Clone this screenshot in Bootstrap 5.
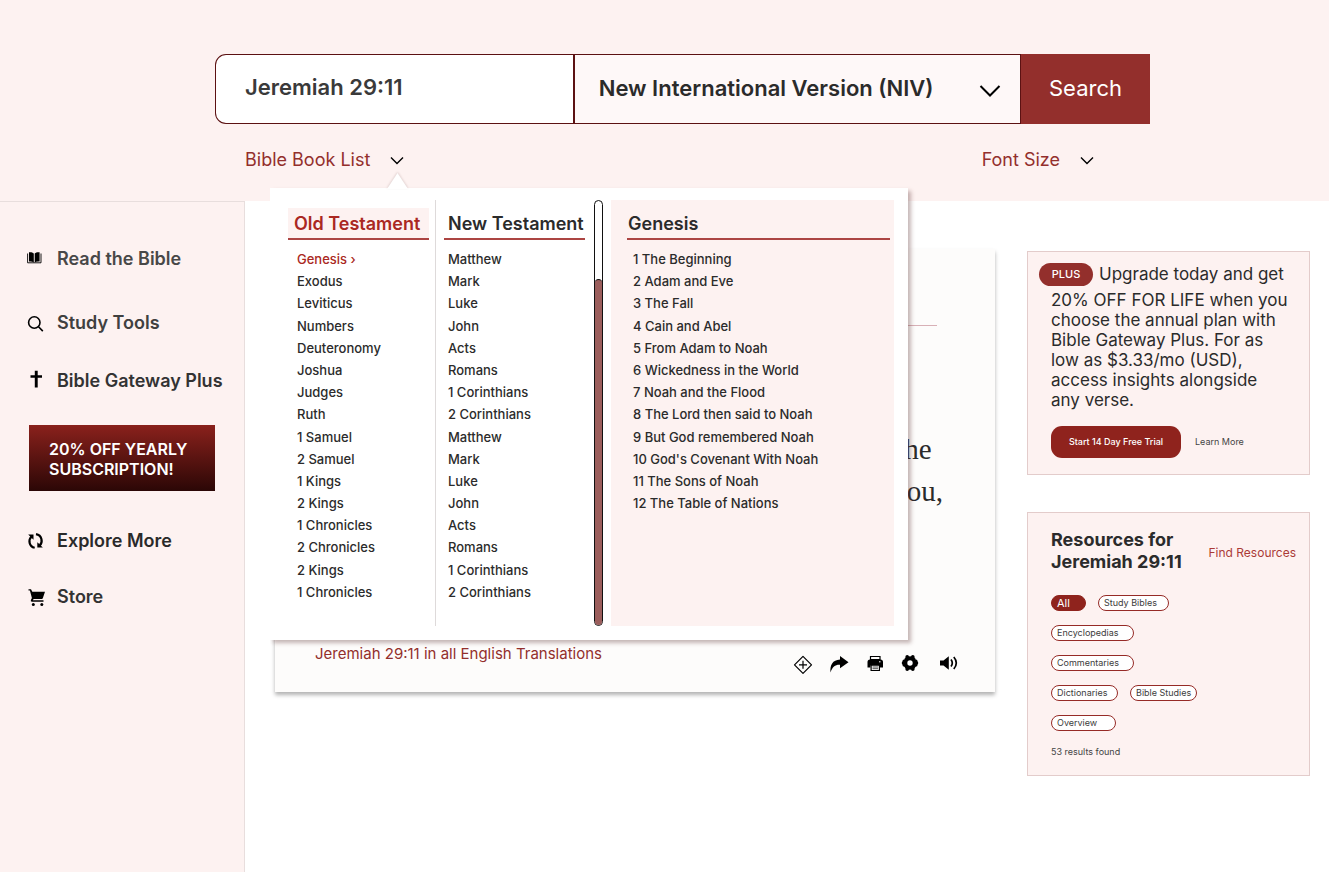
<!DOCTYPE html>
<html lang="en">
<head>
<meta charset="utf-8">
<meta name="viewport" content="width=device-width, initial-scale=1">
<title>Jeremiah 29:11</title>
<link href="https://cdn.jsdelivr.net/npm/bootstrap@5.3.0/dist/css/bootstrap.min.css" rel="stylesheet">
<style>
:root { --blush: #fdf2f1; --brick: #932f2c; --deep: #8f231d; --wine: #5c1112; --ink: #2b2b2b; }
body { font-family: Inter, "Liberation Sans", sans-serif; color: var(--ink); background: #fff; }
a { text-decoration: none; color: inherit; }
ul { list-style: none; margin: 0; padding: 0; }
svg { display: block; flex: none; }

.top-band { background: var(--blush); height: 201px; padding: 54px 179px 0 215px; }
.search-bar { height: 70px; }
.search-bar .form-control, .search-bar .form-select {
  border: 1px solid var(--wine); border-radius: 0; font-size: 22px; font-weight: 600; color: var(--ink); box-shadow: none;
}
.search-bar .form-control { flex: 363 1 0; width: 0; padding: 0 29px 4px; color: #3a3a3a; background: #fff; border-radius: 11px 0 0 11px; border-right-width: 2px; }
.search-bar .form-select {
  flex: 439 1 0; width: 0; padding: 0 60px 2px 24px; background-color: #fef8f8; border-left-width: 0;
  background-image: url("data:image/svg+xml,%3Csvg xmlns='http://www.w3.org/2000/svg' viewBox='0 0 22 14'%3E%3Cpath fill='none' stroke='%23000' stroke-width='2' d='M1.500 2 11 11.500 20.500 2'/%3E%3C/svg%3E");
  background-size: 22px 14px; background-position: right 19px top 29px;
}
.search-btn { width: 129px; border-radius: 0; background: var(--brick); color: #fff; font-size: 22px; border: 0; padding: 0 0 2px; }
.search-btn:hover { background: var(--deep); color: #fff; }
.sub-bar { padding: 24px 56px 0 30px; }
.drop-link { border: 0; background: none; padding: 0; color: var(--brick); font-size: 18px; line-height: 24px; gap: 20px; }

.book-menu { top: 40px; left: 25px; width: 638px; padding: 12px 14px 14px 18px; background: #fff; z-index: 10; box-shadow: 3px 3px 4px rgba(92, 50, 50, .35); clip-path: inset(-20px -12px -12px 0); }
.menu-tip { top: 24px; left: 142px; z-index: 11; filter: drop-shadow(0 -1px 1px rgba(90, 50, 50, .2)); }
.menu-panel { min-height: 426px; padding: 8px 0 23px; }
.panel-a { width: 148px; padding-right: 6px; border-right: 1px solid #dedada; }
.panel-b { width: 141px; margin-left: 8px; }
.panel-c { margin-left: 8px; padding-left: 16px; padding-right: 4px; background: var(--blush); }
.panel-head { font-size: 18px; line-height: 28px; font-weight: 600; margin: 0 0 8px; padding-top: 2px; border-bottom: 2px solid #ac4543; white-space: nowrap; }
.panel-a .panel-head { background: var(--blush); color: #aa2822; padding-left: 6px; }
.panel-b .panel-head { padding-left: 4px; }
.panel-c .panel-head { padding-left: 1px; }
.book-list { display: grid; grid-template-rows: repeat(16, 1fr); font-size: 13px; line-height: 22px; font-weight: 500; padding-left: 9px; }
.panel-b .book-list { padding-left: 4px; }
.panel-c .book-list { padding-left: 6px; }
.book-on { color: #aa2822; }
.scroll-track { width: 9px; margin-left: 9px; border: 1px solid #111; border-radius: 5px; background: #fff; padding-top: 78px; }
.scroll-thumb { background: #9b5e5c; border-top: 1px solid #111; border-radius: 4px; }

.side-nav { width: 245px; background: var(--blush); border: solid #e8dedd; border-width: 1px 1px 0 0; padding-top: 45px; }
.side-link { font-size: 18px; line-height: 24px; font-weight: 600; padding-left: 27px; gap: 12px; white-space: nowrap; color: #333; }
.side-link svg { width: 18px; }
.tone-1 { color: #484848; } .tone-2 { color: #404040; } .tone-3 { color: #2a2a2a; }
.mt-s { margin-top: 32px; } .mt-m { margin-top: 34px; } .mt-l { margin-top: 40px; } .mt-b { margin-top: 38px; }
.promo { margin: 32px 29px 0; padding: 14px 19px 12px 20px; color: #fff; font-size: 16px; line-height: 20px; font-weight: 600; background: linear-gradient(#8a211c, #2b0706); white-space: nowrap; }

.content { padding: 48px 19px 48px 30px; gap: 32px; }
.verse-card { height: 443px; background: #fdfcfb; box-shadow: 0 3px 4px rgba(0, 0, 0, .3); padding: 76px 36px 0 40px; }
.verse-rule { border-top: 1px solid #d8b0b6; margin-right: 22px; }
.verse-text { font: 29px/42px "Liberation Serif", serif; text-indent: 4px; margin: 102px 16px 0 0; }
.verse-foot { margin-top: auto; margin-bottom: 16px; color: var(--brick); }
.verse-link { font-size: 15px; line-height: 20px; margin-bottom: 12px; }
.tool-btn { border: 0; background: none; padding: 0; }
.tool-row { gap: 16px; }

.right-rail { width: 283px; padding-top: 2px; gap: 37px; }
.rail-box { background: var(--blush); border: 1px solid #e3cccb; }
.plus-box { padding: 11px 20px 15px 11px; min-height: 224px; }
.plus-pill { width: 54px; height: 23px; border-radius: 12px; background: var(--brick); color: #fff; font-size: 11px; line-height: 23px; text-align: center; font-weight: 500; margin-right: 6px; }
.plus-lead { font-size: 17px; line-height: 23px; white-space: nowrap; }
.plus-copy { font-size: 17px; line-height: 20px; margin: 4px -10px 0 12px; }
.trial-btn { background: var(--deep); color: #fff; border: 0; border-radius: 11px; width: 130px; height: 32px; font-size: 9px; font-weight: 500; padding: 0; }
.plus-actions { margin: 16px 0 0 12px; gap: 14px; font-size: 9px; color: #444; }
.res-box { padding: 16px 13px 17px 23px; min-height: 264px; }
.res-title { font-size: 18px; line-height: 22px; font-weight: 700; margin: 0; }
.find-link { font-size: 12px; line-height: 20px; color: #ab3a37; margin-top: 3px; }
.chip { height: 16px; border: 1px solid #962b27; border-radius: 8px; background: #fff; color: #3c3c3c; font-size: 9px; line-height: 12px; padding: 0 0 0 5px; text-align: left; white-space: nowrap; }
.chip-on { background: var(--deep); border-color: var(--deep); color: #fff; font-size: 11px; }
.w-xs { width: 35px; } .w-s { width: 65px; } .w-m { width: 67px; } .w-l { width: 71px; } .w-xl { width: 83px; }
.chip-rows { margin-top: 22px; gap: 14px; }
.chip-rows > div { gap: 12px; }
.found { font-size: 9px; line-height: 12px; color: #444; margin: 15px 0 0; }
</style>
</head>
<body class="d-flex flex-column min-vh-100">

<header class="top-band">
  <form class="search-bar d-flex" onsubmit="return false">
    <input class="form-control" type="text" value="Jeremiah 29:11" aria-label="Passage">
    <select class="form-select" aria-label="Version"><option>New International Version (NIV)</option></select>
    <button class="btn search-btn" type="submit">Search</button>
  </form>
  <div class="sub-bar d-flex justify-content-between">
    <div class="position-relative">
      <button class="drop-link d-flex align-items-center" type="button" aria-expanded="true">Bible Book List
        <svg width="14" height="9" viewBox="0 0 14 9" fill="none" stroke="#000" stroke-width="1.400"><path d="M1 1.500 7 7.500 13 1.500"/></svg>
      </button>
      <svg class="menu-tip position-absolute" width="21" height="17" viewBox="0 0 21 17"><path d="M10.500 1 21 17H0z" fill="#fff"/></svg>
      <div class="book-menu position-absolute d-flex">
        <section class="menu-panel panel-a d-flex flex-column">
          <h2 class="panel-head">Old Testament</h2>
          <ul class="book-list flex-grow-1">
            <li><a class="book-on" href="#">Genesis ›</a></li><li><a href="#">Exodus</a></li><li><a href="#">Leviticus</a></li><li><a href="#">Numbers</a></li>
            <li><a href="#">Deuteronomy</a></li><li><a href="#">Joshua</a></li><li><a href="#">Judges</a></li><li><a href="#">Ruth</a></li>
            <li><a href="#">1 Samuel</a></li><li><a href="#">2 Samuel</a></li><li><a href="#">1 Kings</a></li><li><a href="#">2 Kings</a></li>
            <li><a href="#">1 Chronicles</a></li><li><a href="#">2 Chronicles</a></li><li><a href="#">2 Kings</a></li><li><a href="#">1 Chronicles</a></li>
          </ul>
        </section>
        <section class="menu-panel panel-b d-flex flex-column">
          <h2 class="panel-head">New Testament</h2>
          <ul class="book-list flex-grow-1">
            <li><a href="#">Matthew</a></li><li><a href="#">Mark</a></li><li><a href="#">Luke</a></li><li><a href="#">John</a></li>
            <li><a href="#">Acts</a></li><li><a href="#">Romans</a></li><li><a href="#">1 Corinthians</a></li><li><a href="#">2 Corinthians</a></li>
            <li><a href="#">Matthew</a></li><li><a href="#">Mark</a></li><li><a href="#">Luke</a></li><li><a href="#">John</a></li>
            <li><a href="#">Acts</a></li><li><a href="#">Romans</a></li><li><a href="#">1 Corinthians</a></li><li><a href="#">2 Corinthians</a></li>
          </ul>
        </section>
        <div class="scroll-track d-flex flex-column"><div class="scroll-thumb flex-grow-1"></div></div>
        <section class="menu-panel panel-c d-flex flex-column flex-grow-1">
          <h2 class="panel-head">Genesis</h2>
          <ul class="book-list flex-grow-1">
            <li><a href="#">1 The Beginning</a></li><li><a href="#">2 Adam and Eve</a></li><li><a href="#">3 The Fall</a></li><li><a href="#">4 Cain and Abel</a></li>
            <li><a href="#">5 From Adam to Noah</a></li><li><a href="#">6 Wickedness in the World</a></li><li><a href="#">7 Noah and the Flood</a></li><li><a href="#">8 The Lord then said to Noah</a></li>
            <li><a href="#">9 But God remembered Noah</a></li><li><a href="#">10 God's Covenant With Noah</a></li><li><a href="#">11 The Sons of Noah</a></li><li><a href="#">12 The Table of Nations</a></li>
          </ul>
        </section>
      </div>
    </div>
    <button class="drop-link d-flex align-items-center" type="button">Font Size
      <svg width="14" height="9" viewBox="0 0 14 9" fill="none" stroke="#000" stroke-width="1.400"><path d="M1 1.500 7 7.500 13 1.500"/></svg>
    </button>
  </div>
</header>

<div class="d-flex flex-grow-1">
  <nav class="side-nav flex-shrink-0">
    <a class="side-link tone-1 d-flex align-items-center" href="#">
      <svg height="18" viewBox="0 0 18 18"><path d="M2 2.300C4 2 5.500 2.400 6.800 3.500V12.500C5.500 11.500 4 11.200 2 11.500zM12.600 2.300c-2-.3-3.700.1-4.900 1.200v9c1.200-1 2.900-1.300 4.900-1z" fill="#000"/><path d="M.6 3.500v9.300h13.400V3.500" fill="none" stroke="#000" stroke-width=".9"/></svg>Read the Bible</a>
    <a class="side-link tone-2 d-flex align-items-center mt-l" href="#">
      <svg height="18" viewBox="0 0 18 18" fill="none" stroke="#000" stroke-width="1.600"><circle cx="7.300" cy="8.500" r="5.700"/><path d="M11.300 12.500 15.800 17.100"/></svg>Study Tools</a>
    <a class="side-link d-flex align-items-center mt-m" href="#">
      <svg height="22" viewBox="0 0 18 22"><path d="M7.800 .800h2.900v4.400H15v2.600h-4.300v9.700H7.800V7.800H3.500V5.200h4.300z" fill="#000"/></svg>Bible Gateway Plus</a>
    <a class="promo d-block" href="#">20% OFF YEARLY<br>SUBSCRIPTION!</a>
    <a class="side-link tone-3 d-flex align-items-center mt-b" href="#">
      <svg height="18" viewBox="0 0 18 18"><path d="M1.200 2.500H6.500V7.800L5 6.200" fill="#000"/><path d="M4.500 4.500C1 8 2 14.500 7.700 15.800" fill="none" stroke="#000" stroke-width="2.200"/><path d="M15.800 15.500H10.300V10.200L12 11.800" fill="#000"/><path d="M12.700 13.500C16.200 10 15 3.300 9 2.200" fill="none" stroke="#000" stroke-width="2.200"/></svg>Explore More</a>
    <a class="side-link d-flex align-items-center mt-s" href="#">
      <svg height="18" viewBox="0 0 18 18"><path d="M1.500 1.200H4l1.300 2.600H18l-2.200 6.500q-.3.700-1 .7H6.600l-.7 1.200H16.500v1.600H5q-1.800-.3-1.100-1.900l1-1.900L2.900 2.600H1.500z" fill="#000"/><circle cx="6.300" cy="16.400" r="1.500"/><circle cx="14.800" cy="16.400" r="1.500"/></svg>Store</a>
  </nav>

  <main class="content d-flex flex-grow-1 align-items-start">
    <article class="verse-card d-flex flex-column flex-grow-1">
      <div class="verse-rule"></div>
      <p class="verse-text align-self-end">the<br>you,</p>
      <div class="verse-foot d-flex justify-content-between align-items-end">
        <a class="verse-link" href="#">Jeremiah 29:11 in all English Translations</a>
        <div class="tool-row d-flex align-items-center">
          <button class="tool-btn" type="button" aria-label="Add"><svg width="20" height="24" viewBox="0 0 20 24" fill="none" stroke="#000" stroke-width="1.200"><path d="M10 4.300 18.500 12.800 10 21.300 1.500 12.800z" stroke-linejoin="round"/><path d="M10 8.800v8M6 12.800h8"/></svg></button>
          <button class="tool-btn" type="button" aria-label="Share"><svg width="20" height="24" viewBox="0 0 20 24"><path d="M11 4 19.500 10.300 11 16.300V12.800C6.500 12.500 3.500 14.500 1.500 20.500.8 13 3.500 8 11 7.500z"/></svg></button>
          <button class="tool-btn" type="button" aria-label="Print"><svg width="20" height="24" viewBox="0 0 20 24"><path d="M5.500 4.500h9.500V7.500H5.500z" fill="none" stroke="#000" stroke-width="1.200"/><path d="M5 7.500h10.500q2.500 0 2.500 2.500v5.500h-3V13.500H5.500v2H2.500V10q0-2.500 2.500-2.500z"/><path d="M6.100 13.200h8.300v5.300H6.100z" fill="#fff" stroke="#000" stroke-width="1.200"/><path d="M7.500 15h5.500M7.500 16.700h5.500" stroke="#000" stroke-width=".7"/><path d="M14 9.800h1.500" stroke="#fff"/></svg></button>
          <button class="tool-btn" type="button" aria-label="Settings"><svg width="18" height="24" viewBox="0 0 18 24"><circle cx="9" cy="11" r="6.800"/><path d="M6.200 4.800v12.400M11.800 4.800v12.400M2.500 11h13" stroke="#000" stroke-width="3.600" stroke-linecap="round"/><path d="M3 9v4M15 9v4" stroke="#000" stroke-width="3" stroke-linecap="round"/><circle cx="9" cy="11" r="2.700" fill="#fff"/></svg></button>
          <button class="tool-btn ms-1" type="button" aria-label="Listen"><svg width="20" height="24" viewBox="0 0 20 24"><path d="M1 8.500h3.500L9.800 4.200v13.600L4.500 13.500H1z"/><path d="M12 7.500q2.600 3.500 0 7M14.800 5q5 6 0 12" fill="none" stroke="#000" stroke-width="1.700"/></svg></button>
        </div>
      </div>
    </article>

    <aside class="right-rail d-flex flex-column flex-shrink-0">
      <section class="rail-box plus-box">
        <div class="d-flex align-items-center"><span class="plus-pill">PLUS</span><span class="plus-lead">Upgrade today and get</span></div>
        <p class="plus-copy">20% OFF FOR LIFE when you<br>choose the annual plan with<br>Bible Gateway Plus. For as<br>low as $3.33/mo (USD),<br>access insights alongside<br>any verse.</p>
        <div class="plus-actions d-flex align-items-center"><button class="trial-btn" type="button">Start 14 Day Free Trial</button><a href="#">Learn More</a></div>
      </section>
      <section class="rail-box res-box">
        <div class="d-flex align-items-center justify-content-between">
          <h2 class="res-title">Resources for<br>Jeremiah 29:11</h2>
          <a class="find-link" href="#">Find Resources</a>
        </div>
        <div class="chip-rows d-flex flex-column">
          <div class="d-flex"><button class="chip chip-on w-xs" type="button">All</button><button class="chip w-l" type="button">Study Bibles</button></div>
          <div class="d-flex"><button class="chip w-xl" type="button">Encyclopedias</button></div>
          <div class="d-flex"><button class="chip w-xl" type="button">Commentaries</button></div>
          <div class="d-flex"><button class="chip w-m" type="button">Dictionaries</button><button class="chip w-m" type="button">Bible Studies</button></div>
          <div class="d-flex"><button class="chip w-s" type="button">Overview</button></div>
        </div>
        <p class="found">53 results found</p>
      </section>
    </aside>
  </main>
</div>

<script src="https://cdn.jsdelivr.net/npm/bootstrap@5.3.0/dist/js/bootstrap.bundle.min.js"></script>
</body>
</html>
